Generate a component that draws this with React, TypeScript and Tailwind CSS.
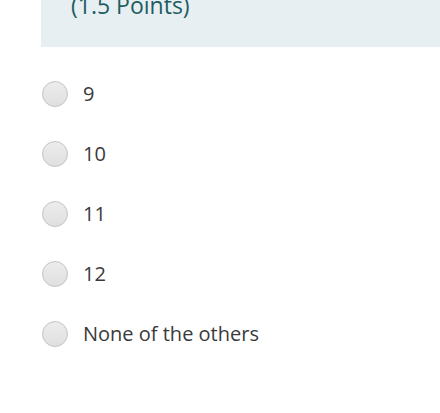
import React from "react";

const options = ["9", "10", "11", "12", "None of the others"];

export default function App() {
  return (
    <div className="w-[440px] h-[413px] bg-white overflow-hidden" style={{ fontFamily: '"Open Sans", "Noto Sans", sans-serif' }}>
      <div className="ml-[41px] h-[47px] bg-[#e8eff2] relative overflow-hidden">
        <div className="absolute left-[30px] top-[-11px] text-[23px] leading-[32px] text-[#1d5d61]">(1.5 Points)</div>
      </div>
      <div className="flex flex-col pt-[17px] pl-[42px]">
        {options.map((o) => (
          <div key={o} className="flex items-center h-[60px] gap-[15px]">
            <div className="w-[26px] h-[26px] rounded-full border border-[#c4c4c4] bg-gradient-to-b from-[#ececec] to-[#e0e0e0] shrink-0" />
            <span className="text-[20px] text-[#3a3a3a] leading-[26px]">{o}</span>
          </div>
        ))}
      </div>
    </div>
  );
}
